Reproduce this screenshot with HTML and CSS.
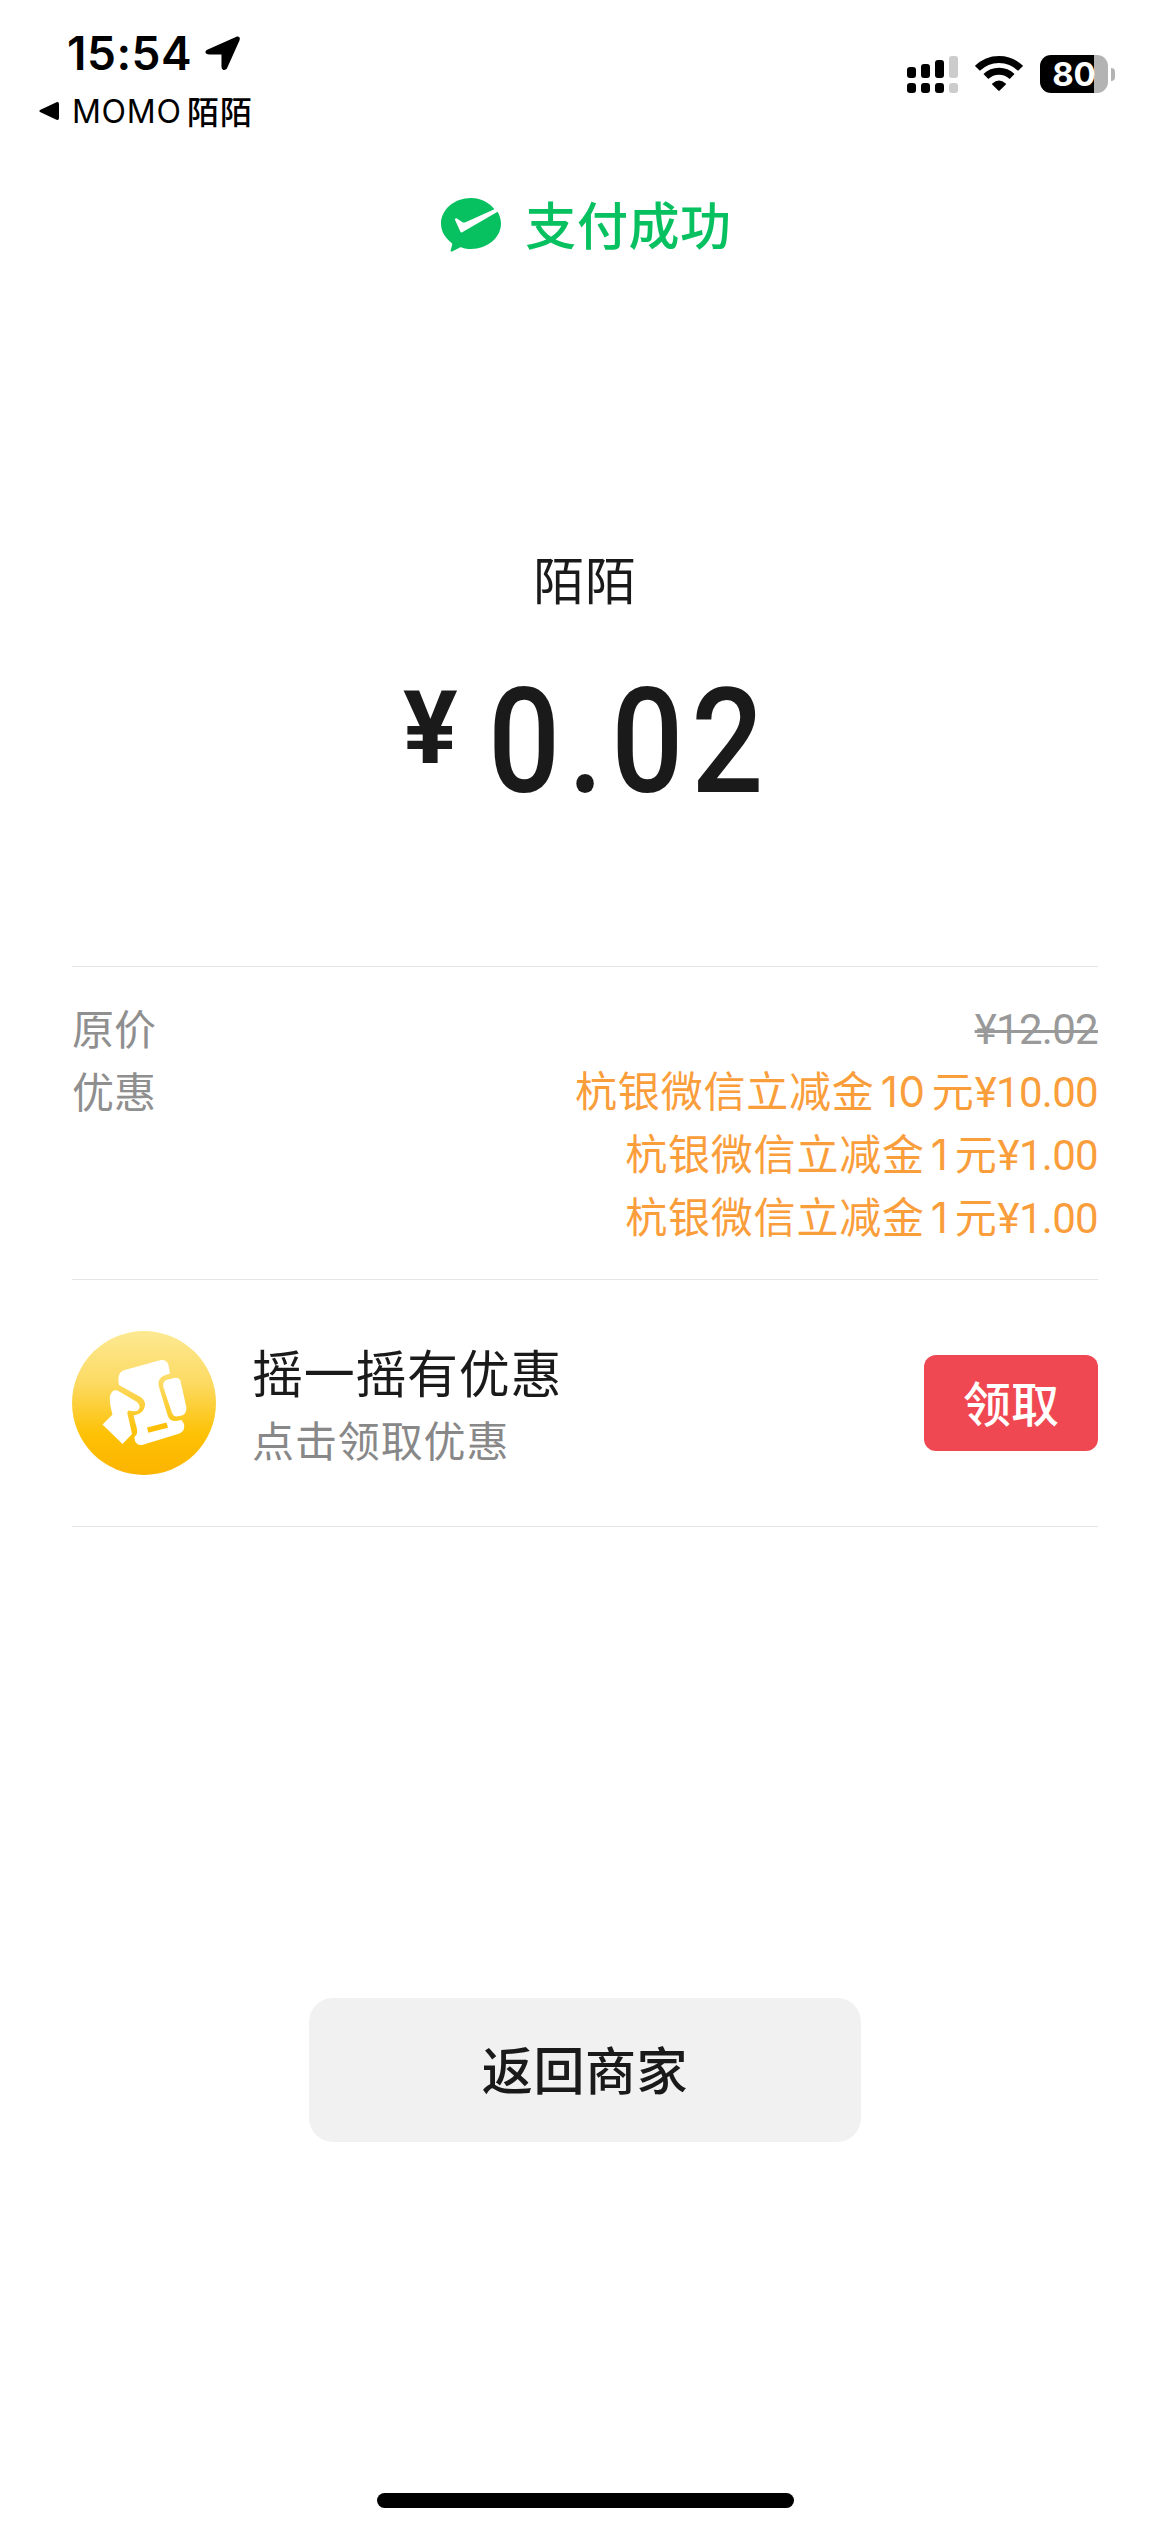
FILE: index.html
```html
<!DOCTYPE html>
<html lang="zh-CN">
<head>
<meta charset="utf-8">
<title>支付成功</title>
<link rel="stylesheet" href="styles.css">
</head>
<body>
<div class="screen">
  <header class="status">
    <div class="status-left">
      <div class="clock">
        <span class="time">15:54</span>
        <svg class="location" viewBox="0 0 36 36"><path d="M3 15.500L32 2.500Q34.500 2 33.700 4.600L21.500 32Q18.500 34.500 18 31V18H5Q1 17.500 3 15.500Z" fill="#000" stroke="#000" stroke-width="2" stroke-linejoin="round"/></svg>
      </div>
      <div class="back-app">
        <svg class="back-arrow" viewBox="0 0 22 20"><path d="M2 9L18.500 1.200Q21 .5 21 3V17Q21 19.500 18.500 18.800L2 11Q.5 10 2 9Z"/></svg>
        <span class="app-name">MOMO</span><span class="app-name-cn">陌陌</span>
      </div>
    </div>
    <div class="status-right">
      <svg class="signal" viewBox="0 0 51 38">
        <g fill="#000">
          <rect x="0" y="12" width="9" height="11" rx="3"/><rect x="14" y="9" width="9" height="14" rx="3"/><rect x="28" y="5" width="9" height="18" rx="3"/>
          <rect x="0" y="28" width="9" height="10" rx="3"/><rect x="14" y="28" width="9" height="10" rx="3"/><rect x="28" y="28" width="9" height="10" rx="3"/>
        </g>
        <g fill="#ccc"><rect x="42" y="1" width="9" height="22" rx="3"/><rect x="42" y="28" width="9" height="10" rx="3"/></g>
      </svg>
      <svg class="wifi" viewBox="0 0 48 36">
        <g fill="none" stroke="#000" stroke-width="7"><path d="M2.400 13.400A30.500 30.500 0 0 1 45.600 13.400"/><path d="M10.900 21.500A18.800 18.800 0 0 1 37.100 21.500"/></g>
        <path d="M17.300 28.500Q24 22.700 30.700 28.500Q31.200 29.100 30.600 29.700L24.700 35.600Q24 36.200 23.300 35.600L17.400 29.700Q16.800 29.100 17.300 28.500Z"/>
      </svg>
      <div class="battery"><span class="battery-body">80</span><span class="battery-tip"></span></div>
    </div>
  </header>

  <div class="result">
    <svg class="wechat-pay" viewBox="0 0 60 54">
      <path fill="#07c160" d="M21.200 34.200C20.300 34.700 19.700 34.500 19.300 33.600L14.100 22C13.700 20.500 14.700 19.700 15.900 20.400L21.500 24.200C22.500 24.700 23.500 24.700 24.500 24.300L53.400 11.300C48 4.400 39.500 0 30 0C13.400 0 0 11.500 0 25.600C0 33.400 4 40 10.700 45C11.200 45.400 11.300 46 11.200 46.600L9.600 52.600C9.500 53.600 10.200 54 11 53.600L18.500 49.700C19.200 49.300 19.900 49.300 20.600 49.500C23.600 50.600 26.700 51 30 51C46.600 51 60 39.600 60 25.600C60 21.300 58.700 17.200 56.600 13.700Z"/>
    </svg>
    <h1 class="result-text">支付成功</h1>
  </div>

  <section class="payment">
    <div class="payee">陌陌</div>
    <div class="amount"><span class="currency">¥</span><span class="value">0.02</span></div>
  </section>

  <main class="details">
    <dl class="prices">
      <div class="price-row"><dt>原价</dt><dd class="original">¥12.02</dd></div>
      <div class="price-row">
        <dt>优惠</dt>
        <dd class="discounts">
          <div class="discount">杭银微信立减金<span class="num">10</span>元<span class="money">¥10.00</span></div>
          <div class="discount">杭银微信立减金<span class="num">1</span>元<span class="money">¥1.00</span></div>
          <div class="discount">杭银微信立减金<span class="num">1</span>元<span class="money">¥1.00</span></div>
        </dd>
      </div>
    </dl>
    <section class="promo">
      <svg class="promo-icon" viewBox="0 0 144 144">
        <defs><linearGradient id="gold" x1="0" y1="0" x2="0" y2="1"><stop offset="0" stop-color="#fde992"/><stop offset=".35" stop-color="#fcdb65"/><stop offset=".72" stop-color="#fdc104"/><stop offset="1" stop-color="#fdb400"/></linearGradient></defs>
        <circle cx="72" cy="72" r="72" fill="url(#gold)"/>
        <g fill="#fff">
          <path d="M51 39.500L88 29.200Q94.500 28 96.500 34L98 42.500L91 45Q85 48.500 87 56L96 85.500Q98.500 90.500 104 90L109.500 89L112 93Q113.500 99.500 107.500 102.500L71 113.800Q63 115.500 62.300 106Q66 103 65 98L61.500 84.500Q72 83 73 74.500Q73.500 69 68.500 66L47 54Q44.500 43 51 39.500Z"/>
          <path d="M45.500 59.500L65 71Q70 75.500 66 79.500Q63 81 56.500 79.500Q54.500 81.500 56 85L60 103L50.500 113L30.500 93.500L40.500 83.500Q37 71 38 65Q40 58 45.500 59.500Z"/>
          <path d="M94 49L103.500 46.700Q107 46.500 108.500 50L114.300 76Q115 82.500 110 84.500L104.500 85.500Q101.500 85.500 100 82L91.300 56Q90.500 51 94 49Z"/>
        </g>
        <path d="M75 96.500L94.500 91.500L96 96.700L76.300 101.700Z" fill="#fdc006"/>
      </svg>
      <div class="promo-copy">
        <h2 class="promo-title">摇一摇有优惠</h2>
        <p class="promo-sub">点击领取优惠</p>
      </div>
      <button class="claim">领取</button>
    </section>
  </main>

  <footer class="footer">
    <button class="return">返回商家</button>
    <div class="home-bar"></div>
  </footer>
</div>
</body>
</html>
```
FILE: styles.css
```css
* { box-sizing: border-box; margin: 0; padding: 0; }
body {
  background: #fff;
  color: #1a1a1a;
  font-family: "Noto Sans CJK SC", sans-serif;
  font-weight: 400;
}
svg { display: block; flex: none; }
button { border: 0; font-family: inherit; }
.screen { width: 1170px; height: 2532px; display: flex; flex-direction: column; overflow: hidden; background: #fff; }

.status { height: 135px; padding: 28px 55px 0 38px; display: flex; justify-content: space-between; color: #000; }
.clock { height: 50px; padding-left: 29px; display: flex; align-items: center; gap: 13px; }
.time { width: 124px; font: 600 46px/50px Inter, sans-serif; letter-spacing: .5px; white-space: nowrap; }
.location { width: 37px; height: 37px; }
.back-app { height: 42px; margin-top: 12px; display: flex; align-items: center; }
.back-arrow { width: 22px; height: 20px; margin-right: 12px; }
.app-name { width: 115px; padding-top: 1px; font: 400 32px/42px Inter, sans-serif; letter-spacing: .7px; white-space: nowrap; }
.app-name-cn { font-size: 32px; line-height: 42px; padding-bottom: 2px; letter-spacing: 1px; font-weight: 500; }
.status-right { height: 38px; margin-top: 27px; display: flex; }
.signal { width: 51px; height: 38px; margin-right: 17px; }
.wifi { width: 48px; height: 36px; margin-right: 17px; }
.battery { display: flex; align-items: center; gap: 3px; }
.battery-body {
  width: 68px; height: 38px; border-radius: 11px; text-align: center; color: #fff;
  padding-right: 2px; padding-left: 2px;
  background: linear-gradient(90deg, #000 54px, #b3b3b3 54px);
  font: 700 33px/38px Inter, sans-serif;
}
.battery-tip { width: 4px; height: 13px; background: #b3b3b3; border-radius: 0 4px 4px 0; }

.result { height: 180px; padding-left: 3px; display: flex; justify-content: center; align-items: center; gap: 24px; }
.wechat-pay { width: 60px; height: 54px; }
.result-text { font-size: 51px; line-height: 60px; padding-bottom: 4px; font-weight: 500; color: #07c160; letter-spacing: .6px; }

.payment { height: 651px; padding-top: 228px; display: flex; flex-direction: column; align-items: center; }
.payee { font-size: 51px; line-height: 70px; letter-spacing: .8px; }
.amount { width: 364px; margin-top: 57px; display: flex; align-items: flex-start; font-family: Roboto, sans-serif; }
.currency { width: 85px; padding-top: 7px; font-size: 102px; line-height: 102px; font-weight: 700; }
.value { width: 279px; font-size: 146px; line-height: 146px; font-weight: 500; letter-spacing: 9px; transform: scaleX(.87); transform-origin: left; }

.details { margin: 0 72px; }
.prices { height: 314px; padding-top: 28px; border-top: 1px solid #e5e5e5; border-bottom: 1px solid #e5e5e5; font-size: 42px; line-height: 63px; }
.price-row { display: flex; justify-content: space-between; }
dt { height: 63px; color: #8f8f8f; }
.original { height: 63px; margin-top: 3px; margin-bottom: -3px; color: #999; font-family: Roboto, sans-serif; letter-spacing: -.7px; text-decoration: line-through; text-decoration-thickness: 3px; }
.discounts { margin-top: -1px; }
.discount { height: 63px; color: #fa9d3b; text-align: right; letter-spacing: .8px; white-space: nowrap; }
.num { font-family: Inter, sans-serif; padding: 0 6px; }
.money { font-family: Roboto, sans-serif; letter-spacing: -.7px; }
.promo { height: 247px; border-bottom: 1px solid #e5e5e5; display: flex; align-items: center; }
.promo-icon { width: 144px; height: 144px; }
.promo-copy { margin-left: 36px; flex: 1; }
.promo-title { font-size: 51px; line-height: 72px; font-weight: 400; letter-spacing: .7px; }
.promo-sub { font-size: 42px; line-height: 64px; color: #888; letter-spacing: .9px; }
.claim { width: 174px; height: 96px; padding-bottom: 4px; border-radius: 12px; background: #f04852; color: #fff; font-size: 48px; font-weight: 500; line-height: 92px; }

.footer { flex: 1; padding-top: 471px; padding-bottom: 24px; display: flex; flex-direction: column; align-items: center; justify-content: space-between; }
.return { width: 552px; height: 144px; padding-bottom: 3px; border-radius: 24px; background: #f1f1f1; color: #1a1a1a; font-size: 51px; line-height: 141px; font-weight: 500; letter-spacing: .6px; }
.home-bar { width: 417px; height: 15px; border-radius: 8px; background: #000; }
```
